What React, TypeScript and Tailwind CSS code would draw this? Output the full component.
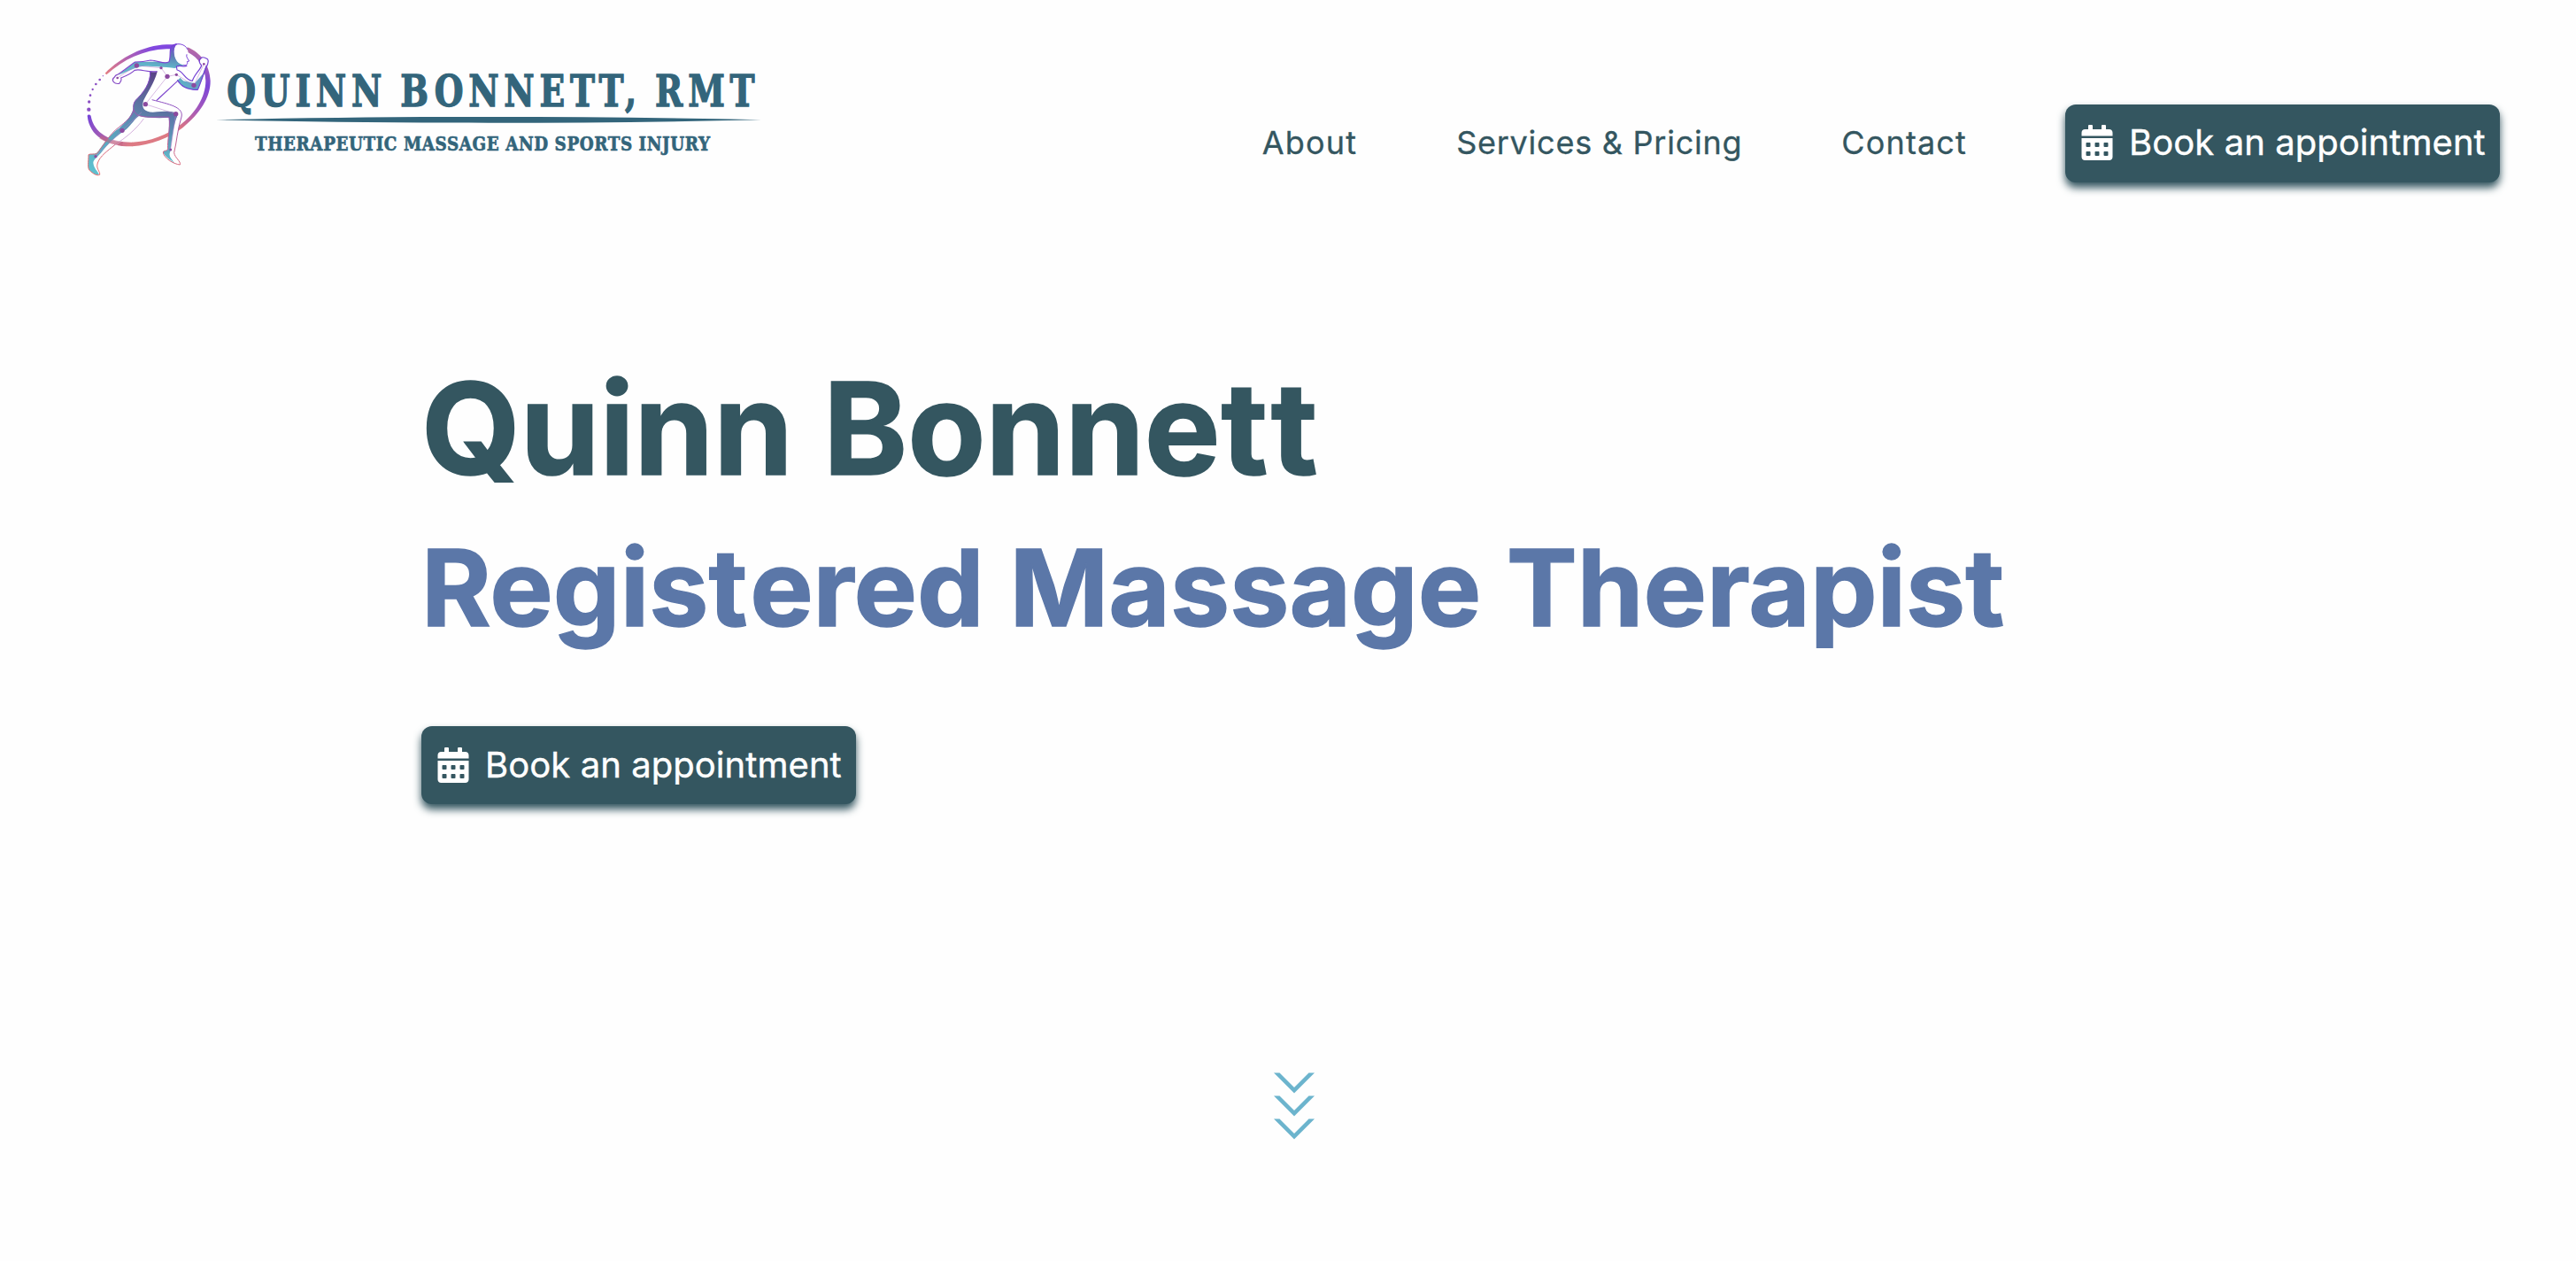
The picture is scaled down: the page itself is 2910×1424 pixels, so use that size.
import React from "react";
import { FaCalendarAlt } from "react-icons/fa";

const dots: [number, number, number][] = [
  [109, 167, 2], [98, 180, 4], [85, 195, 4], [74, 213, 3.5], [66, 233, 4], [62, 255, 5], [61, 281, 6.5],
];

const joints: [number, number, number][] = [
  [158, 174, 4], [223, 132, 8], [306, 140, 5], [327, 169, 8], [358, 163, 5], [417, 199, 8],
  [451, 127, 4], [253, 263, 8], [356, 296, 8], [338, 417, 4.5], [174, 352, 8], [84, 440, 5],
];

function Logo() {
  return (
    <svg className="block h-[180px] w-[800px] shrink-0 overflow-visible" viewBox="0 0 2400 540">
      <defs>
        <linearGradient id="ringTop" gradientUnits="userSpaceOnUse" x1="116" y1="165" x2="270" y2="65">
          <stop offset="0" stopColor="#e67f80" />
          <stop offset="1" stopColor="#8148df" />
        </linearGradient>
        <linearGradient id="ringRight" gradientUnits="userSpaceOnUse" x1="440" y1="90" x2="330" y2="385">
          <stop offset="0" stopColor="#b36aa8" />
          <stop offset="0.3" stopColor="#7c45d8" />
          <stop offset="0.6" stopColor="#a75ab8" />
          <stop offset="0.85" stopColor="#df777f" />
          <stop offset="1" stopColor="#dd7a84" />
        </linearGradient>
        <linearGradient id="ringLeft" gradientUnits="userSpaceOnUse" x1="60" y1="300" x2="200" y2="400">
          <stop offset="0" stopColor="#7645d8" />
          <stop offset="1" stopColor="#dd7a84" />
        </linearGradient>
        <linearGradient id="outline" gradientUnits="userSpaceOnUse" x1="320" y1="60" x2="240" y2="500">
          <stop offset="0" stopColor="#7440d8" />
          <stop offset="0.45" stopColor="#8d4fc0" />
          <stop offset="0.75" stopColor="#c5638c" />
          <stop offset="1" stopColor="#e87070" />
        </linearGradient>
        <linearGradient id="torso" gradientUnits="userSpaceOnUse" x1="280" y1="150" x2="220" y2="300">
          <stop offset="0" stopColor="#5a4286" />
          <stop offset="1" stopColor="#5d83ab" />
        </linearGradient>
        <linearGradient id="backLeg" gradientUnits="userSpaceOnUse" x1="240" y1="280" x2="70" y2="490">
          <stop offset="0" stopColor="#5f7aab" />
          <stop offset="0.5" stopColor="#5aa4bd" />
          <stop offset="1" stopColor="#5fc0cf" />
        </linearGradient>
        <linearGradient id="frontLeg" gradientUnits="userSpaceOnUse" x1="340" y1="290" x2="330" y2="460">
          <stop offset="0" stopColor="#5b70a5" />
          <stop offset="1" stopColor="#5fbccb" />
        </linearGradient>
        <linearGradient id="arm" gradientUnits="userSpaceOnUse" x1="450" y1="130" x2="380" y2="210">
          <stop offset="0" stopColor="#6f7fc4" />
          <stop offset="1" stopColor="#5fb4c6" />
        </linearGradient>
        <linearGradient id="headShade" gradientUnits="userSpaceOnUse" x1="350" y1="60" x2="340" y2="140">
          <stop offset="0" stopColor="#7a3fd8" />
          <stop offset="0.5" stopColor="#5e7cb4" />
          <stop offset="1" stopColor="#61b5c9" />
        </linearGradient>
      </defs>

      {/* Ring */}
      <path fill="url(#ringTop)" d="M116 158 C170 105 245 64 325 61 C340 60 350 61 356 62 L344 77 C338 76 332 76 325 76 C245 79 178 112 121 163 Z" />
      <path fill="url(#ringRight)" d="M394 70 C440 86 471 132 473 184 C474 240 436 297 380 342 C335 377 270 402 208 406 C203 403 203 396 207 392 C268 390 328 367 371 333 C421 296 457 239 457 184 C456 140 432 105 398 88 Z" />
      <path fill="url(#ringLeft)" d="M56 302 C58 297 66 297 68 303 C78 362 137 393 209 392 L209 406 C130 408 63 374 56 302 Z" />
      {dots.map(([x, y, r]) => (
        <circle key={`${x}-${y}`} cx={x} cy={y} r={r} fill="#8b4fc4" />
      ))}

      {/* Rear leg */}
      <path fill="#fff" fillOpacity=".5" d="M222 298 C206 322 188 344 166 356 C140 375 109 405 88 440 L76 450 C76 478 88 500 98 502 C100 490 84 482 91 462 C120 425 190 385 247 312 L240 300Z" />
      <path fill="url(#backLeg)" d="M215 262 L232 302 C218 310 206 332 188 348 C160 366 127 396 102 428 C88 444 76 450 76 462 C78 482 92 490 96 502 C80 506 72 492 61 485 C57 470 61 450 60 434 C70 430 82 434 90 426 C112 397 133 363 163 345 C184 326 211 302 215 262 Z" />
      <path fill="none" stroke="url(#outline)" strokeWidth="3" d="M215 272 C212 304 184 324 163 341 C132 363 109 405 88 431 C78 434 66 430 60 434 C60 460 55 478 64 488 C76 498 88 507 98 502 C100 490 84 482 91 462 C99 438 125 421 150 400" />
      <path fill="none" stroke="#b77bc6" strokeWidth="1.8" d="M150 400 C185 377 220 350 247 312" />
      <path fill="none" stroke="#c4647c" strokeWidth="12" opacity=".5" d="M100 374 Q128 391 175 398" />

      {/* Torso and front leg */}
      <path fill="#fff" d="M270 152 C272 190 250 222 222 246 C209 262 212 290 230 299 C263 311 298 304 333 307 C338 347 326 388 328 418 L313 422 C312 441 347 466 370 468 C374 458 358 444 350 427 C359 391 361 350 375 306 C377 274 334 263 289 249 L362 184 L410 213 L352 122 L306 126 Z" />
      <path fill="url(#torso)" d="M269 152 C279 155 286 154 293 152 C283 192 258 225 246 251 C238 278 251 289 278 290 C309 289 333 285 350 290 L361 307 C318 310 264 312 231 302 C209 296 207 265 218 251 C246 224 270 190 269 152 Z" />
      <path fill="url(#frontLeg)" d="M332 302 C336 345 327 390 330 414 C326 424 313 418 313 426 C321 446 345 454 354 466 C343 451 329 438 337 424 C342 391 346 340 360 304 L350 290 Z" />
      <path fill="none" stroke="url(#outline)" strokeWidth="3" d="M269 152 C271 191 246 225 219 250 C205 270 213 297 232 302 C263 311 298 304 333 307 C338 347 326 388 329 414 C326 424 313 418 313 426 C314 444 347 466 370 468 C374 456 352 445 350 427 C359 391 361 350 375 306 C383 273 334 263 275 248" />
      <path fill="none" stroke="#7f48ce" strokeWidth="3.5" d="M290 251 C315 228 338 206 362 184" />

      {/* Rear arm and shoulders */}
      <path fill="#fff" d="M341 78 L336 117 L306 125 L220 119 L159 164 L143 179 L147 194 L165 193 L171 175 L219 147 L270 153 L300 153 L360 168 L380 184 L390 143 L370 120 Z" />
      <path fill="url(#headShade)" d="M360 58 C344 60 337 68 337 82 C336 98 337 110 333 119 C318 127 300 116 278 119 C256 119 239 120 218 120 L160 165 L223 139 C255 130 294 137 325 138 C345 139 352 144 360 138 C372 134 380 132 386 130 C370 128 355 115 352 96 C350 82 350 70 360 58 Z" />
      <path fill="none" stroke="url(#outline)" strokeWidth="3.5" strokeLinejoin="round" d="M360 60 C344 60 337 68 337 82 C336 98 337 110 333 119 C320 130 300 116 270 114 C250 119 236 120 218 120 C199 132 179 151 158 163 C150 163 150 171 145 174 C137 183 147 196 164 193 C169 187 173 180 170 174 C190 166 205 159 216 148 C239 142 255 156 293 152" />

      {/* Head */}
      <path fill="#fff" d="M351 75 C362 56 391 63 395 82 C392 93 394 102 401 116 L394 119 C396 128 389 132 379 129 C358 126 347 101 351 75Z" />
      <path fill="none" stroke="#7940d9" strokeWidth="3" d="M345 64 C362 55 387 58 396 78 M393 94 C390 105 397 108 401 117 L394 119 C398 128 391 132 382 130" />

      {/* Front arm */}
      <path fill="url(#arm)" d="M361 181 C373 204 397 216 430 214 C440 190 454 162 458 136 L445 130 C440 157 425 175 420 192 L382 184 L371 173 Z" />
      <path fill="#fff" d="M358 134 L392 147 L401 138 L424 153 L411 184 L382 184 L371 173 L362 181 Q352 160 358 147Z" />
      <path fill="#fff" d="M439 112 Q450 98 464 114 L460 126 L448 160 L420 192 L412 184 Q420 160 443 129 Q434 120 439 112Z" />
      <path fill="none" stroke="#7440d4" strokeWidth="3.5" strokeLinejoin="round" d="M394 132 C384 139 370 129 358 135 L360 147 C379 148 388 184 412 184 C420 160 438 148 443 132 C435 124 432 114 440 108 C447 99 458 107 464 111 C470 120 463 126 462 132 C454 141 445 181 430 214 C398 215 374 205 361 181" />

      {/* Joints */}
      <path fill="none" stroke="#b57fca" strokeWidth="1.6" d="M158 174 L223 132 L306 140 L327 169 L358 163 L417 199 L451 127 M327 169 L253 263 L356 296 L338 417 M240 290 L174 352 L84 440" />
      {joints.map(([x, y, r]) => (
        <circle key={`${x}-${y}`} cx={x} cy={y} r={r} fill="#8c4a9f" />
      ))}

      {/* Wordmark */}
      <g fill="#33657b" stroke="#33657b" fontFamily="'DejaVu Serif', 'Noto Serif', serif" fontWeight="700">
        <text x="529" y="270" fontSize="143" strokeWidth="4" letterSpacing="22" wordSpacing="-14" textLength="1806" lengthAdjust="spacingAndGlyphs">QUINN BONNETT, RMT</text>
        <text x="624" y="419" fontSize="64" strokeWidth="2" letterSpacing="2" textLength="1544" lengthAdjust="spacingAndGlyphs">THERAPEUTIC MASSAGE AND SPORTS INJURY</text>
      </g>
      <path fill="#33657b" d="M492 316 C800 309 1100 306 1416 306 C1730 306 2030 309 2340 316 C2030 323 1730 326 1416 326 C1100 326 800 323 492 316 Z" />
    </svg>
  );
}

function BookButton({ raised = false }: { raised?: boolean }) {
  return (
    <button
      className={`flex h-[88px] w-[491px] shrink-0 items-center gap-[18px] whitespace-nowrap rounded-[12px] bg-[#345660] pl-[18px] text-[40px] leading-none text-white shadow-[0_6px_10px_#345660] [-webkit-text-stroke:0.4px_#ffffff] ${raised ? "pb-[2px]" : "pb-0"}`}
    >
      <FaCalendarAlt className="h-[40px] w-[36px] shrink-0" />
      <span className="tracking-[0.06px]">Book an appointment</span>
    </button>
  );
}

function Chevron() {
  return (
    <svg className="block h-[24px] w-[46px]" viewBox="0 0 46 24">
      <path fill="#6cb4cd" d="M0 0.5 H6.5 L23 17 L39.5 0.5 H46 L23 23.5 Z" />
    </svg>
  );
}

export default function App() {
  return (
    <div className="flex h-[1424px] w-[2910px] flex-col overflow-hidden bg-[#fefefe] font-['Inter',sans-serif] text-[#345660]">
      <header className="flex h-[400px] items-start justify-between pl-[80px] pr-[86px] pt-[30px]">
        <Logo />
        <div className="mt-[88px] flex items-center">
          <nav className="flex items-center gap-[112px] pb-[3px] pr-[111px] text-[36px] leading-none [-webkit-text-stroke:0.3px_#345660]">
            <a className="tracking-[1.2px]">About</a>
            <a className="tracking-[0.75px]">Services &amp; Pricing</a>
            <a className="tracking-[1.15px]">Contact</a>
          </nav>
          <BookButton raised />
        </div>
      </header>
      <main className="flex flex-col items-start pl-[476px]">
        <h1 className="text-[144px] font-bold leading-[168px] [-webkit-text-stroke:1.6px_#345660]">
          Quinn Bonn<span className="tracking-[1px]">e</span><span className="tracking-[3.5px]">t</span>t
        </h1>
        <h2 className="mt-[20px] text-[120px] font-bold leading-[152px] text-[#5b77a8] [-webkit-text-stroke:1.4px_#5b77a8]">
          Regis<span className="tracking-[2.8px]">t</span>ere<span className="tracking-[0.4px]">d</span> Massage Therapist
        </h2>
        <div className="mt-[80px]">
          <BookButton />
        </div>
      </main>
      <div className="mt-[303px] flex flex-col gap-[2px] pl-[1439px]">
        <Chevron />
        <Chevron />
        <Chevron />
      </div>
    </div>
  );
}
